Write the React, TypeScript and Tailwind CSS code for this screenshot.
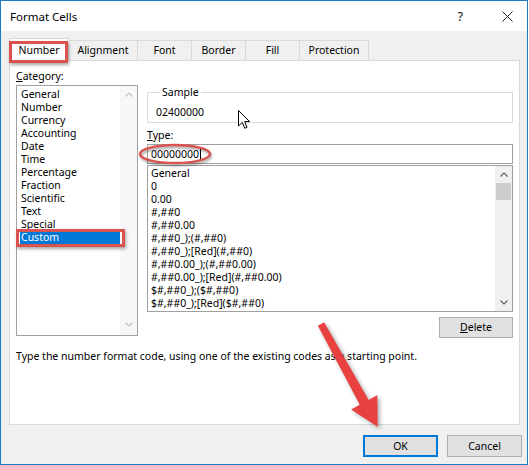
const categories = [
  "General",
  "Number",
  "Currency",
  "Accounting",
  "Date",
  "Time",
  "Percentage",
  "Fraction",
  "Scientific",
  "Text",
  "Special",
  "Custom",
];

const formats = [
  "General",
  "0",
  "0.00",
  "#,##0",
  "#,##0.00",
  "#,##0_);(#,##0)",
  "#,##0_);[Red](#,##0)",
  "#,##0.00_);(#,##0.00)",
  "#,##0.00_);[Red](#,##0.00)",
  "$#,##0_);($#,##0)",
  "$#,##0_);[Red]($#,##0)",
];

const tabs = [
  { label: "Number", w: "w-[60px]" },
  { label: "Alignment", w: "w-[70px]" },
  { label: "Font", w: "w-[55px]" },
  { label: "Border", w: "w-[55px]" },
  { label: "Fill", w: "w-[55px]" },
  { label: "Protection", w: "w-[70px]" },
];

function Chevron({ up, color }: { up?: boolean; color: string }) {
  return (
    <svg width="8" height="5" viewBox="0 0 8 5" fill="none">
      <polyline
        points={up ? "0.5,4.5 4,1 7.5,4.5" : "0.5,0.5 4,4 7.5,0.5"}
        stroke={color}
        strokeWidth="1.2"
      />
    </svg>
  );
}

export default function App() {
  return (
    <div className="w-[529px] h-[465px] bg-white">
      <div className="relative flex h-[465px] w-[528px] flex-col border border-[#1f7bc9] bg-[#f0f0f0] font-['Noto_Sans',sans-serif] text-[10.5px] leading-[13px] text-black">
        {/* title bar */}
        <div className="flex h-[30px] items-center bg-white pl-[9px]">
          <span className="text-[11.5px]">Format Cells</span>
          <span className="ml-auto mr-[39px] text-[12px]">?</span>
          <svg width="11" height="11" viewBox="0 0 11 11" className="mr-[14px]">
            <path d="M0.5 0.5 L10.5 10.5 M10.5 0.5 L0.5 10.5" stroke="#222" strokeWidth="1" />
          </svg>
        </div>

        {/* body */}
        <div className="pl-[8px] pr-[8px] pt-[7px]">
          <div className="flex h-[22px] items-end">
            {tabs.map((t, i) =>
              i === 0 ? (
                <div
                  key={t.label}
                  className={`relative z-10 -mb-px flex h-[23px] ${t.w} items-center justify-center border border-b-0 border-[#d9d9d9] bg-white`}
                >
                  {t.label}
                  <span className="absolute left-[-1px] right-[0px] top-[2px] bottom-[-2px] border-[3px] border-[#d9534f] shadow-[1px_2px_3px_rgba(0,0,0,0.35)]" />
                </div>
              ) : (
                <div
                  key={t.label}
                  className={`-ml-px flex h-[20px] ${t.w} items-center justify-center border border-b-0 border-[#d9d9d9] bg-[#f0f0f0]`}
                >
                  {t.label}
                </div>
              )
            )}
          </div>

          <div className="flex h-[365px] w-[511px] flex-col border border-[#d9d9d9] bg-white pl-[6px] pr-[6px]">
            <div className="flex gap-[9px]">
              {/* category column */}
              <div className="flex w-[122px] flex-col pt-[9px]">
                <div>
                  <span className="underline">C</span>ategory:
                </div>
                <div className="mt-[2px] flex h-[251px] border border-[#a0a0a0]">
                  <div className="flex-1 pl-[3px] pt-[2px]">
                    {categories.map((c) =>
                      c === "Custom" ? (
                        <div key={c} className="relative h-[13px] bg-[#0078d7] pl-[1px] text-white">
                          {c}
                          <span className="absolute left-[-4px] right-[-5px] top-[-2px] bottom-[-3px] border-[3px] border-[#d9534f] shadow-[1px_2px_3px_rgba(0,0,0,0.35)]" />
                        </div>
                      ) : (
                        <div key={c} className="h-[13px] pl-[1px]">
                          {c}
                        </div>
                      )
                    )}
                  </div>
                  <div className="flex w-[17px] flex-col items-center justify-between bg-[#f7f7f7] pt-[6px] pb-[8px]">
                    <Chevron up color="#c4c4c4" />
                    <Chevron color="#c4c4c4" />
                  </div>
                </div>
              </div>

              {/* right column */}
              <div className="flex w-[366px] flex-col pt-[25px]">
                <fieldset className="border border-[#dcdcdc] px-[8px] pt-[7px] pb-[3px]">
                  <legend className="ml-[4px] px-[2px]">Sample</legend>
                  <div>02400000</div>
                </fieldset>
                <div className="mt-[6px]">
                  <span className="underline">T</span>ype:
                </div>
                <div className="relative mt-[2px] flex h-[20px] items-center border border-[#a0a0a0] pl-[3px]">
                  <span>00000000</span>
                  <span className="ml-px h-[13px] w-px bg-black" />
                  <svg
                    width="76"
                    height="24"
                    viewBox="0 0 76 24"
                    className="absolute left-[-11px] top-[-3px] overflow-visible drop-shadow-[1px_2px_1px_rgba(0,0,0,0.35)]"
                  >
                    <ellipse cx="38" cy="12" rx="35" ry="9" fill="none" stroke="#d9534f" strokeWidth="2.5" />
                  </svg>
                </div>
                <div className="mt-[1px] flex h-[147px] border border-[#a0a0a0]">
                  <div className="flex-1 pl-[3px] pt-[1px]">
                    {formats.map((f) => (
                      <div key={f} className="h-[13px]">
                        {f}
                      </div>
                    ))}
                  </div>
                  <div className="flex w-[17px] flex-col bg-[#f0f0f0]">
                    <div className="flex h-[17px] items-center justify-center">
                      <Chevron up color="#606060" />
                    </div>
                    <div className="mx-[1px] h-[17px] bg-[#cdcdcd]" />
                    <div className="mt-auto flex h-[17px] items-center justify-center">
                      <Chevron color="#606060" />
                    </div>
                  </div>
                </div>
                <button className="mt-[5px] flex h-[21px] w-[74px] items-center justify-center self-end border border-[#adadad] bg-[#e1e1e1]">
                  <span className="underline">D</span>elete
                </button>
              </div>
            </div>

            <div className="mt-[12px]">
              Type the number format code, using one of the existing codes as a starting point.
            </div>
          </div>
        </div>

        {/* footer */}
        <div className="flex justify-end gap-[9px] pr-[5px] pt-[10px]">
          <button className="flex h-[22px] w-[75px] items-center justify-center border-2 border-[#0078d7] bg-[#e1e1e1]">
            OK
          </button>
          <button className="flex h-[22px] w-[75px] items-center justify-center border border-[#adadad] bg-[#e1e1e1]">
            Cancel
          </button>
        </div>

        {/* mouse pointer */}
        <svg
          width="13"
          height="20"
          viewBox="0 0 13 20"
          className="pointer-events-none absolute left-[237px] top-[109px]"
        >
          <path
            d="M0.5 0.5 L0.5 16 L4.3 12.4 L6.8 18.3 L9 17.3 L6.6 11.6 L11.6 11.6 Z"
            fill="white"
            stroke="black"
            strokeWidth="1"
            strokeLinejoin="round"
          />
        </svg>

        {/* red annotation arrow */}
        <svg
          width="529"
          height="465"
          viewBox="0 0 529 465"
          className="pointer-events-none absolute -left-px -top-px drop-shadow-[2px_2px_2px_rgba(0,0,0,0.35)]"
        >
          <polygon
            points="317.9,325.7 324.1,322.3 368.6,399.9 377.3,395.1 377.7,426.8 351.1,409.5 359.8,404.7"
            fill="#e8413f"
            strokeLinejoin="round"
          />
        </svg>
      </div>
    </div>
  );
}
